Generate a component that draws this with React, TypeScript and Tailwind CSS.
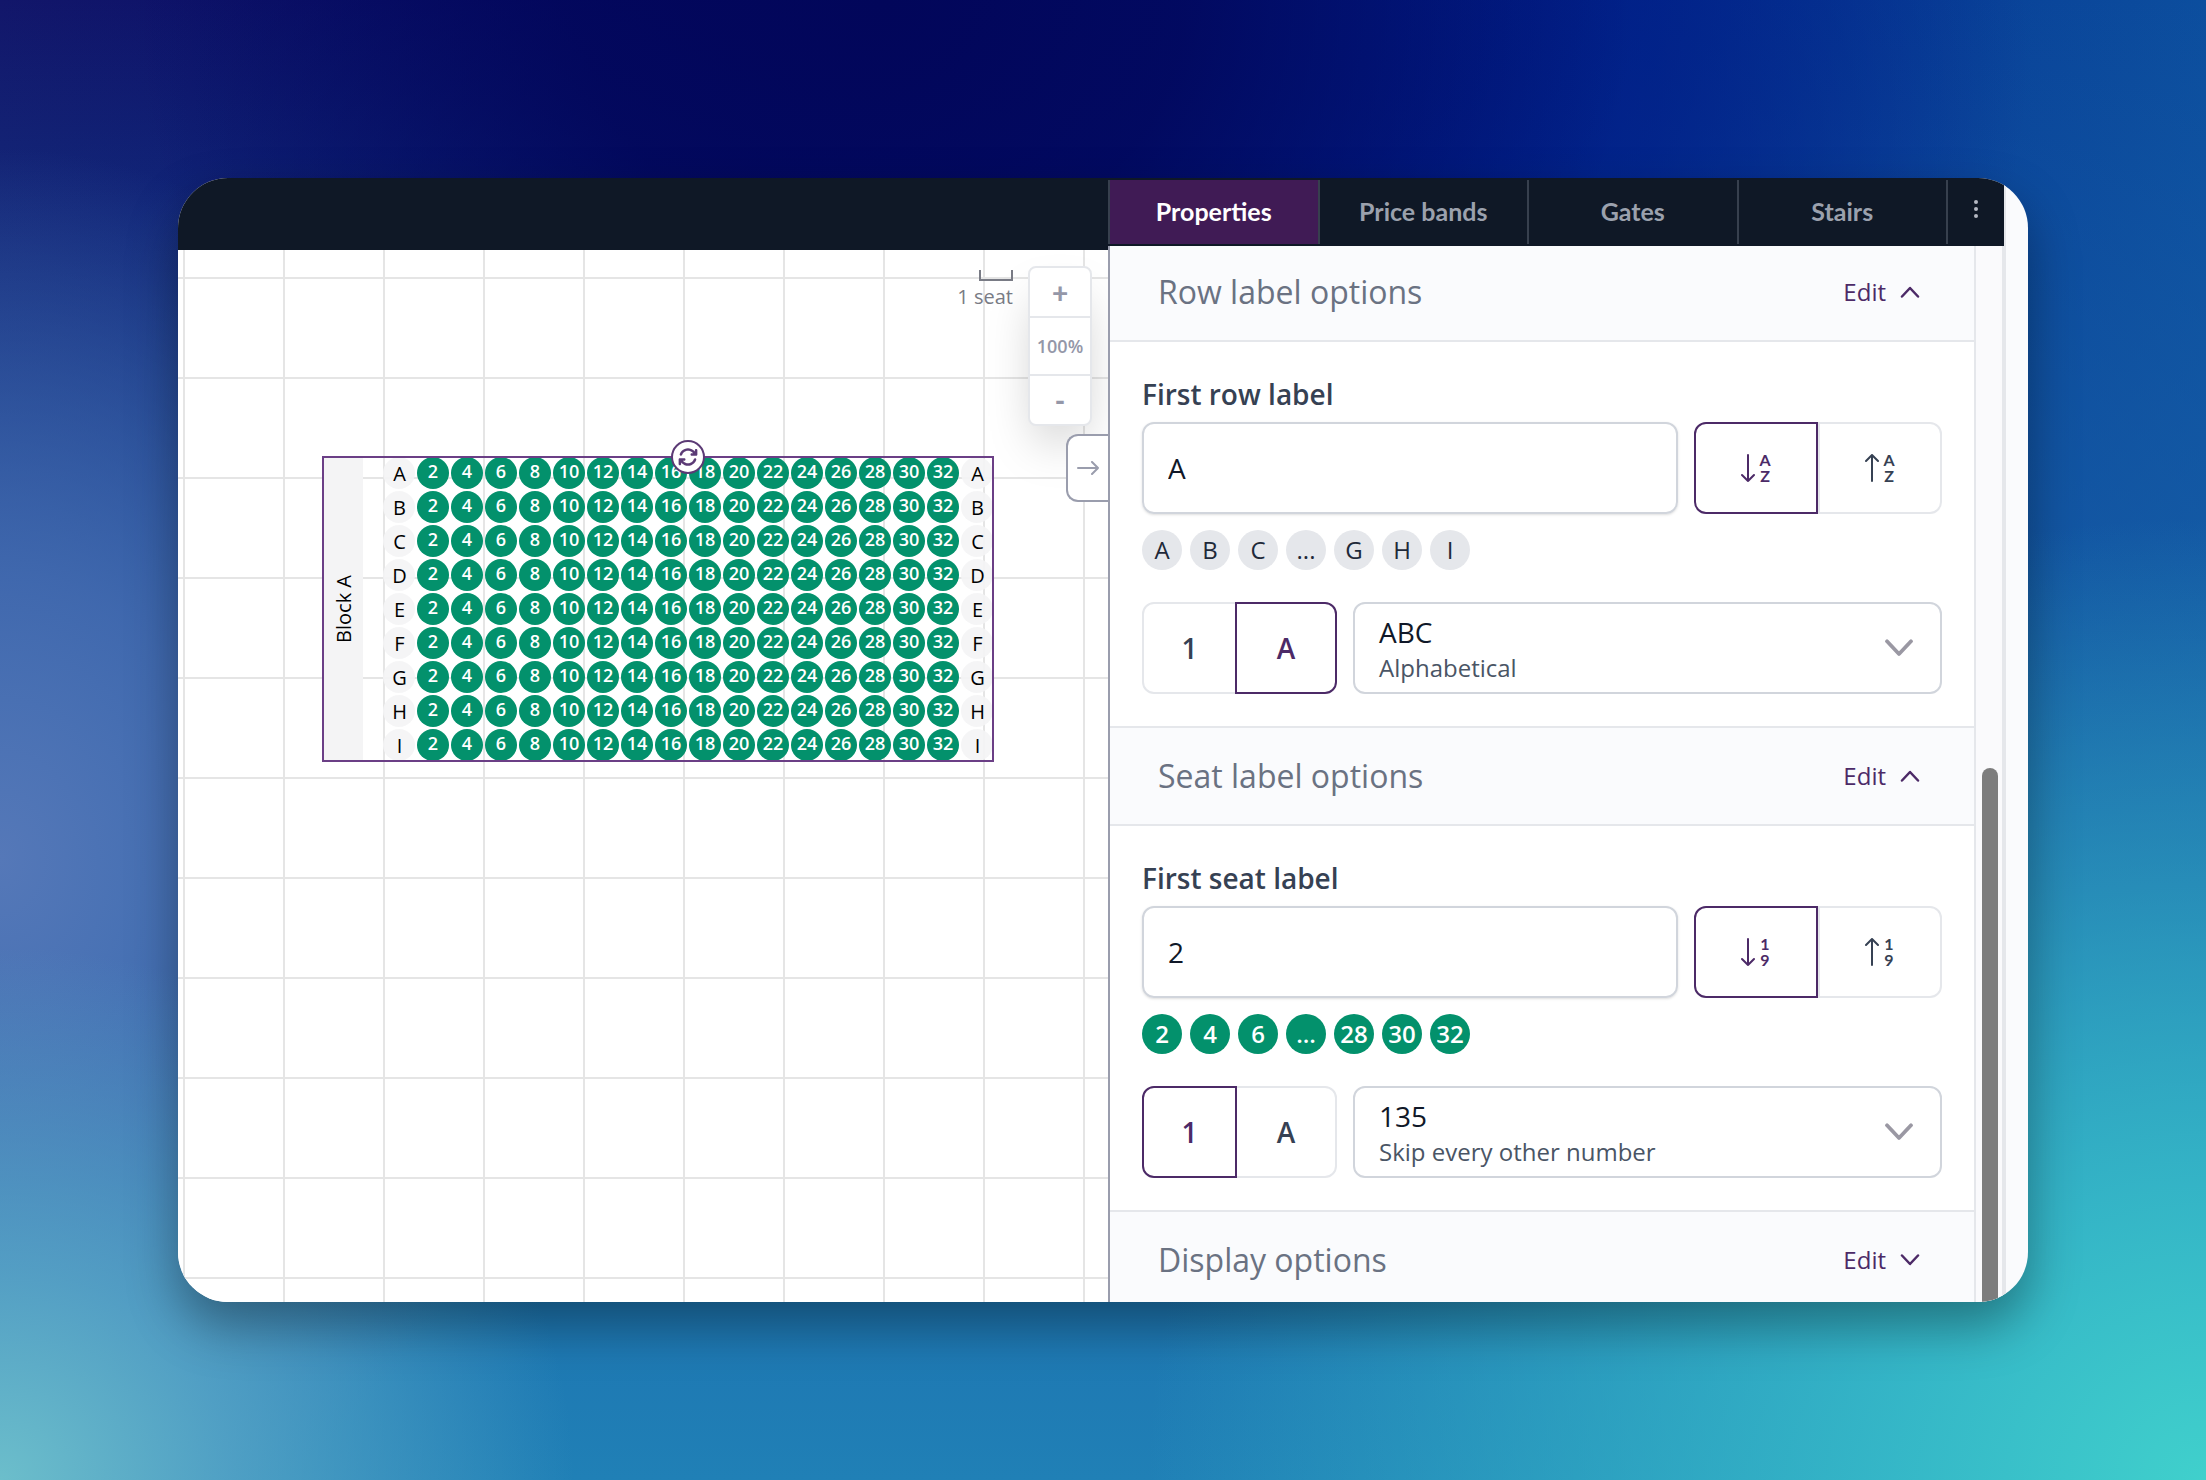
import { useState } from "react";
import type { ReactNode } from "react";
import { FaArrowsRotate } from "react-icons/fa6";

const ROWS = ["A", "B", "C", "D", "E", "F", "G", "H", "I"];
const SEATS = Array.from({ length: 16 }, (_, i) => (i + 1) * 2);
const TABS = ["Properties", "Price bands", "Gates", "Stairs"];

function Chevron({ up = false, className = "" }: { up?: boolean; className?: string }) {
  return (
    <svg viewBox="0 0 20 12" fill="none" stroke="currentColor" strokeLinecap="round" strokeLinejoin="round" className={className} aria-hidden="true">
      <path d={up ? "M2 10.5 10 2l8 8.5" : "M2 1.5 10 10l8-8.5"} />
    </svg>
  );
}

function SortIcon({ up = false, range }: { up?: boolean; range: [string, string] }) {
  return (
    <span className="flex items-center gap-1">
      <svg width="14" height="28" viewBox="0 0 14 28" fill="none" stroke="currentColor" strokeWidth="2" strokeLinecap="round" strokeLinejoin="round" aria-hidden="true">
        <path d={up ? "M7 27V1M1 7l6-6 6 6" : "M7 1v26M1 21l6 6 6-6"} />
      </svg>
      <span className="flex w-3 flex-col items-center font-['Lato',sans-serif] text-base leading-4 font-bold">
        <span>{range[0]}</span>
        <span>{range[1]}</span>
      </span>
    </span>
  );
}

interface ToggleProps {
  selected: boolean;
  side: "left" | "right";
  label: string;
  className: string;
  onClick: () => void;
  children: ReactNode;
}

function Toggle({ selected, side, label, className, onClick, children }: ToggleProps) {
  return (
    <button
      type="button"
      aria-pressed={selected}
      aria-label={label}
      onClick={onClick}
      className={`flex h-full items-center justify-center border-2 ${side === "left" ? "rounded-l-xl" : "rounded-r-xl"} ${
        selected ? "relative z-10 border-[#4c2a67] text-[#4c2a67]" : "border-gray-200 text-gray-700"
      } ${className}`}
    >
      {children}
    </button>
  );
}

function SectionHeader({ title, open = false }: { title: string; open?: boolean }) {
  return (
    <div className="flex h-[100px] shrink-0 items-center justify-between border-y-2 border-gray-200 bg-[#fafbfd] pr-[54px] pl-12">
      <h2 className="text-[32px] text-gray-500">{title}</h2>
      <button type="button" className="flex items-center gap-3.5 text-2xl text-[#4c2a67]">
        Edit
        <Chevron up={open} className="h-3 w-5 stroke-[2.5]" />
      </button>
    </div>
  );
}

interface LabelSectionProps {
  id: string;
  label: string;
  initial: string;
  chips: string[];
  chipClass: string;
  range: [string, string];
  kind: "number" | "letter";
  scheme: string;
  description: string;
}

function LabelSection({ id, label, initial, chips, chipClass, range, kind, scheme, description }: LabelSectionProps) {
  const [value, setValue] = useState(initial);
  const [ascending, setAscending] = useState(true);
  const [type, setType] = useState(kind);

  return (
    <div className="flex flex-col p-8">
      <label htmlFor={id} className="mb-2 text-[28px] leading-10 font-semibold text-gray-700">
        {label}
      </label>
      <div className="flex h-[92px] gap-4">
        <input
          id={id}
          value={value}
          onChange={(e) => setValue(e.target.value)}
          className="min-w-0 flex-1 rounded-xl border-2 border-gray-300 px-6 text-[28px] text-gray-900 shadow-sm"
        />
        <div className="flex">
          <Toggle selected={ascending} side="left" label="Ascending" className="w-31" onClick={() => setAscending(true)}>
            <SortIcon range={range} />
          </Toggle>
          <Toggle selected={!ascending} side="right" label="Descending" className="w-31" onClick={() => setAscending(false)}>
            <SortIcon up range={range} />
          </Toggle>
        </div>
      </div>
      <div className="mt-4 mb-8 flex gap-2">
        {chips.map((chip) => (
          <span key={chip} className={`flex size-10 items-center justify-center rounded-full text-2xl ${chipClass}`}>
            {chip}
          </span>
        ))}
      </div>
      <div className="flex h-[92px] gap-4">
        <div className="flex text-[28px] font-semibold">
          <Toggle selected={type === "number"} side="left" label="Numbers" className="w-[95px]" onClick={() => setType("number")}>
            1
          </Toggle>
          <Toggle selected={type === "letter"} side="right" label="Letters" className="-ml-0.5 w-[102px]" onClick={() => setType("letter")}>
            A
          </Toggle>
        </div>
        <div className="relative flex flex-1 items-center justify-between rounded-xl border-2 border-gray-300 pr-[26px] pl-6">
          <div className="pt-1">
            <div className="text-[28px] leading-9 text-gray-900">{scheme}</div>
            <div className="text-2xl leading-9 text-gray-600">{description}</div>
          </div>
          <Chevron className="h-[18px] w-[30px] stroke-[2.5] text-[#9a98a3]" />
          <select aria-label={`${label} sequence`} className="absolute inset-0 w-full cursor-pointer opacity-0">
            <option>{scheme}</option>
          </select>
        </div>
      </div>
    </div>
  );
}

function RowLabel({ children }: { children: ReactNode }) {
  return (
    <span className="flex size-[34px] items-center justify-center">
      <span className="flex size-8 items-center justify-center rounded-full bg-[#f4f4f5]/90 pt-0.5 pl-px text-xl leading-7 text-black">{children}</span>
    </span>
  );
}

function SeatBlock() {
  return (
    <div className="absolute top-[206px] left-36 flex">
      <div className="flex w-[41px] items-center justify-center bg-[#f4f4f5] pl-0.5">
        <span className="rotate-180 text-xl text-black [writing-mode:vertical-rl]">Block A</span>
      </div>
      <div className="ml-[19px]">
        {ROWS.map((row) => (
          <div key={row} className="flex">
            <RowLabel>{row}</RowLabel>
            {SEATS.map((seat) => (
              <span key={seat} className="flex size-[34px] items-center justify-center">
                <span className="flex size-8 items-center justify-center rounded-full bg-[#03916c] pb-1 text-lg leading-7 font-semibold text-white">{seat}</span>
              </span>
            ))}
            <RowLabel>{row}</RowLabel>
          </div>
        ))}
      </div>
      <div className="pointer-events-none absolute inset-0 border-2 border-[#6b3f86]" />
      <button
        type="button"
        aria-label="Rotate block"
        className="absolute -top-4 left-[349px] flex size-[34px] items-center justify-center rounded-full border-2 border-[#5b3a75] bg-white text-xl text-[#5b3a75]"
      >
        <FaArrowsRotate />
      </button>
    </div>
  );
}

function Canvas() {
  return (
    <section className="flex min-w-0 flex-1 flex-col">
      <div className="h-18 shrink-0 bg-[#0f1826]" />
      <div className="relative flex-1 overflow-hidden bg-white bg-[linear-gradient(to_right,#e5e5e5_2px,transparent_2px),linear-gradient(to_bottom,#e5e5e5_2px,transparent_2px)] bg-size-[100px_100px] bg-position-[5px_27px]">
        <SeatBlock />
        <div className="absolute top-5 right-[95px] flex flex-col items-end text-xl leading-8 text-[#797b85]">
          <span className="h-[11px] w-[34px] border-2 border-t-0 border-[#797b85]" />
          1 seat
        </div>
        <div className="absolute top-4 right-4 flex w-16 flex-col divide-y-2 divide-gray-200 rounded-lg border-2 border-gray-200 bg-white text-[#9497a8] shadow-2xl">
          <button type="button" className="h-[50px] font-['Lato',sans-serif] text-[28px] font-black" aria-label="Zoom in">
            +
          </button>
          <span className="flex h-[58px] items-center justify-center text-lg font-semibold">100%</span>
          <button type="button" className="h-12 font-['Lato',sans-serif] text-[28px] font-black" aria-label="Zoom out">
            -
          </button>
        </div>
        <button
          type="button"
          aria-label="Collapse panel"
          className="absolute top-[184px] right-0 flex h-[68px] w-[42px] items-center justify-center rounded-l-xl border-2 border-r-0 border-[#9a9dad] bg-white text-[#9a9dad]"
        >
          <svg width="22" height="14" viewBox="0 0 22 14" fill="none" stroke="currentColor" strokeWidth="2" strokeLinecap="round" strokeLinejoin="round" aria-hidden="true">
            <path d="M1 7h20M15 1l6 6-6 6" />
          </svg>
        </button>
      </div>
    </section>
  );
}

function Panel() {
  const [tab, setTab] = useState("Properties");

  return (
    <aside className="flex w-[896px] shrink-0 flex-col">
      <div role="tablist" className="flex h-17 shrink-0 bg-[#0f1826] py-0.5 font-['Lato',sans-serif] text-[25px] font-bold">
        {TABS.map((name) => (
          <button
            key={name}
            type="button"
            role="tab"
            aria-selected={tab === name}
            onClick={() => setTab(name)}
            className={`flex-1 border-l-2 border-[#37404e] ${tab === name ? "bg-[#401b55] text-white" : "text-[#9ba1ad]"}`}
          >
            {name}
          </button>
        ))}
        <button type="button" aria-label="More" className="flex w-[58px] items-center justify-center border-l-2 border-[#37404e] pb-1.5 text-[#b4b8c2]">
          <svg width="4" height="20" viewBox="0 0 4 20" fill="currentColor" aria-hidden="true">
            <circle cx="2" cy="3" r="2" />
            <circle cx="2" cy="10" r="2" />
            <circle cx="2" cy="17" r="2" />
          </svg>
        </button>
      </div>
      <div className="flex min-h-0 flex-1 border-l-2 border-[#9a9dad]">
        <div className="flex flex-1 flex-col overflow-hidden bg-white">
          <div className="-mt-1 flex flex-col">
            <SectionHeader title="Row label options" open />
            <LabelSection
              id="first-row"
              label="First row label"
              initial="A"
              chips={["A", "B", "C", "...", "G", "H", "I"]}
              chipClass="bg-gray-200 text-gray-800"
              range={["A", "Z"]}
              kind="letter"
              scheme="ABC"
              description="Alphabetical"
            />
            <SectionHeader title="Seat label options" open />
            <LabelSection
              id="first-seat"
              label="First seat label"
              initial="2"
              chips={["2", "4", "6", "...", "28", "30", "32"]}
              chipClass="bg-[#03916c] text-white font-semibold"
              range={["1", "9"]}
              kind="number"
              scheme="135"
              description="Skip every other number"
            />
            <SectionHeader title="Display options" />
          </div>
        </div>
        <div className="flex w-[30px] flex-col border-x-2 border-gray-200 bg-[#fafafc] pr-1 pl-1.5">
          <div className="flex-1" />
          <div className="h-[534px] w-4 rounded-t-full bg-[#7d7d7d]" />
        </div>
      </div>
    </aside>
  );
}

export default function App() {
  return (
    <div className="flex h-screen bg-[#0f4fa0] bg-[radial-gradient(ellipse_34%_44%_at_40%_0%,#02065a_0%,#02065ad9_40%,#02065a00_100%),radial-gradient(ellipse_30%_40%_at_62%_4%,#001c86_0%,#001c86b3_45%,#001c8600_100%),radial-gradient(ellipse_48%_65%_at_100%_100%,#40d0cc_0%,#38bfcadd_30%,#2a90c000_100%),radial-gradient(ellipse_26%_36%_at_0%_100%,#6cbecb_0%,#5aa8c8cc_40%,#3a80b800_100%),radial-gradient(ellipse_26%_48%_at_0%_58%,#5578b8_0%,#4a70b4cc_40%,#3060a800_100%),linear-gradient(to_bottom,#06107000_0%,#1860a8_60%,#2080b6_100%),linear-gradient(to_right,#12166a_0%,#020a68_35%,#001f88_60%,#0c4e9e_100%)] p-[178px] font-['Open_Sans',sans-serif]">
      <main className="flex min-w-0 flex-1 overflow-hidden rounded-[50px] bg-[#fafbfd] shadow-[0_24px_50px_rgba(0,0,0,0.35)]">
        <Canvas />
        <Panel />
        <div className="w-6 shrink-0 border-l-2 border-gray-200" />
      </main>
    </div>
  );
}
